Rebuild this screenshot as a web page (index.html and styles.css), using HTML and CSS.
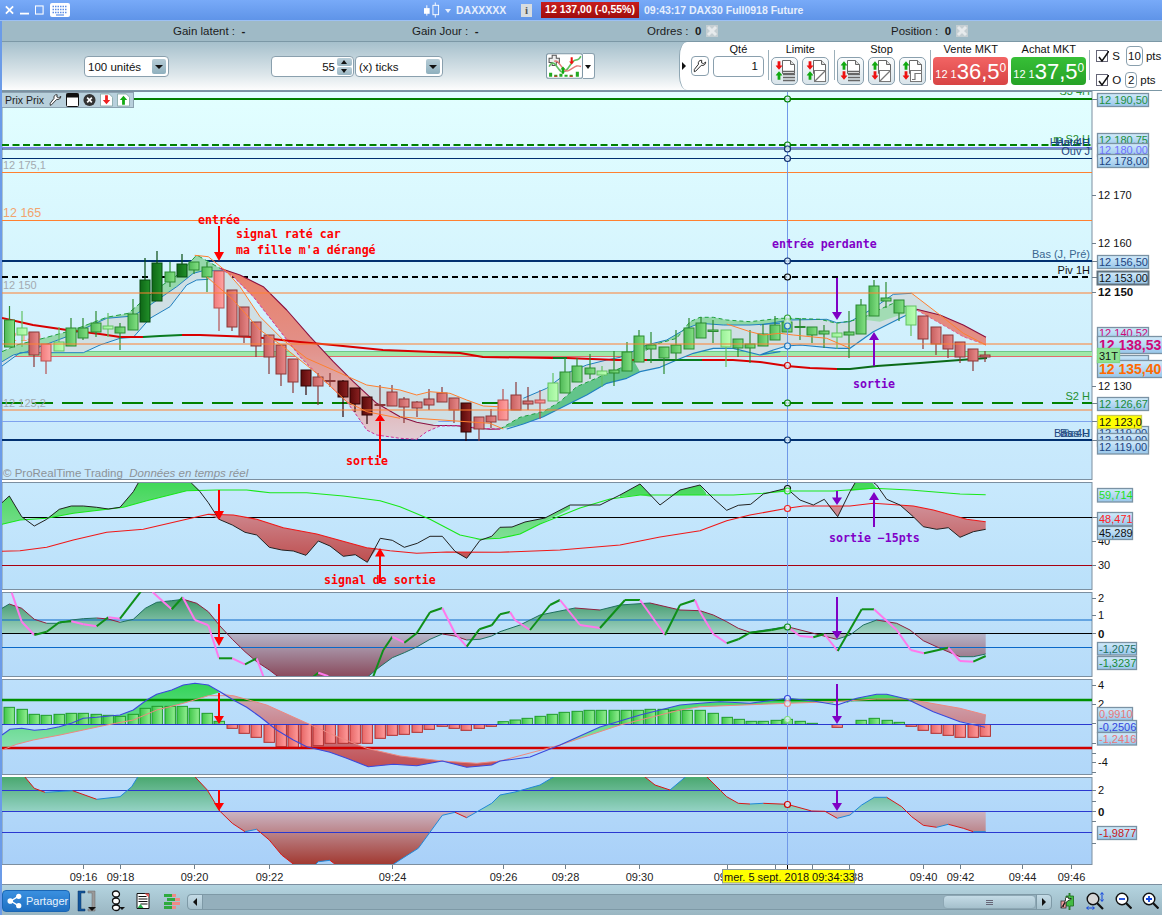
FILE: index.html
```html
<!DOCTYPE html>
<html lang="fr">
<head>
<meta charset="utf-8">
<title>DAX30 Full0918 Future</title>
<link rel="stylesheet" href="styles.css">
</head>
<body>
<svg class="defs" width="0" height="0">
  <defs>
    <symbol id="doc" viewBox="0 0 24 24">
      <path d="M9.5 1.5h8l4 4v9h-12z" fill="#fff" stroke="#666"/>
      <path d="M17.500 1.500v4h4" fill="#ddd" stroke="#666"/>
    </symbol>
    <symbol id="dn" viewBox="0 0 10 12"><path d="M3 0h4v6h3l-5 6-5-6h3z" fill="#ee1111"/></symbol>
    <symbol id="up" viewBox="0 0 10 12"><path d="M3 12h4V6h3L5 0 0 6h3z" fill="#11aa11"/></symbol>
    <symbol id="lines" viewBox="0 0 12 12"><path d="M0 1.500h12M0 4.500h12M0 7.500h12M0 10.500h12" stroke="#666" stroke-width="1.600"/></symbol>
    <symbol id="diag" viewBox="0 0 12 12"><rect x=".5" y=".5" width="11" height="11" fill="#fff" stroke="#777"/><path d="M1 11L11 1" stroke="#777" stroke-width="1.200"/></symbol>
    <symbol id="step" viewBox="0 0 12 12"><rect x=".5" y=".5" width="11" height="11" fill="#fff" stroke="#777"/><path d="M2 9.500h3V3.500h7" fill="none" stroke="#777" stroke-width="1.200"/></symbol>
    <symbol id="wrench" viewBox="0 0 16 16"><path d="M1.500 14.500l1.500-.5 6.500-6.800c2.500.8 5-.8 5-3.700l-2.500 1.800-2.300-1 .3-2.800c-2.800-.3-4.500 1.800-3.800 4.500L1.500 12z" fill="#fff" stroke="#222" stroke-width="1.100"/></symbol>
    <symbol id="bad" viewBox="0 0 12 12"><rect width="12" height="12" fill="#c4ced2"/><path d="M2 2l8 8M10 2l-8 8" stroke="#e6eaec" stroke-width="3"/></symbol>
    <linearGradient id="pm" x1="0" y1="0" x2="0" y2="1"><stop offset="0" stop-color="#e2ffff"/><stop offset="1" stop-color="#c6e7fc"/></linearGradient>
    <linearGradient id="p2g" x1="0" y1="0" x2="0" y2="1"><stop offset="0" stop-color="#c8e9fd"/><stop offset="1" stop-color="#bae0fa"/></linearGradient>
    <linearGradient id="p3g" x1="0" y1="0" x2="0" y2="1"><stop offset="0" stop-color="#c2e4fb"/><stop offset="1" stop-color="#b6dbf9"/></linearGradient>
    <linearGradient id="p4g" x1="0" y1="0" x2="0" y2="1"><stop offset="0" stop-color="#bde0fb"/><stop offset="1" stop-color="#b1d7f9"/></linearGradient>
    <linearGradient id="p5g" x1="0" y1="0" x2="0" y2="1"><stop offset="0" stop-color="#b7dcfa"/><stop offset="1" stop-color="#a9d0f8"/></linearGradient>
    <linearGradient id="lab" x1="0" y1="0" x2="0" y2="1"><stop offset="0" stop-color="#d2ebfb"/><stop offset="1" stop-color="#98c6ea"/></linearGradient>
    <linearGradient id="cg" x1="0" y1="0" x2="1" y2="0"><stop offset="0" stop-color="#4fb857"/><stop offset="1" stop-color="#84e184"/></linearGradient>
    <linearGradient id="cd" x1="0" y1="0" x2="1" y2="0"><stop offset="0" stop-color="#0e6716"/><stop offset="1" stop-color="#22902a"/></linearGradient>
    <linearGradient id="cl" x1="0" y1="0" x2="1" y2="0"><stop offset="0" stop-color="#98f098"/><stop offset="1" stop-color="#bcffb4"/></linearGradient>
    <linearGradient id="cr" x1="0" y1="0" x2="1" y2="0"><stop offset="0" stop-color="#c65f5f"/><stop offset="1" stop-color="#e88a8a"/></linearGradient>
    <linearGradient id="cp" x1="0" y1="0" x2="1" y2="0"><stop offset="0" stop-color="#f07a7a"/><stop offset="1" stop-color="#ffa4a4"/></linearGradient>
    <linearGradient id="ck" x1="0" y1="0" x2="1" y2="0"><stop offset="0" stop-color="#5a0a0a"/><stop offset="1" stop-color="#8c2222"/></linearGradient>
    <linearGradient id="hg" x1="0" y1="0" x2="1" y2="0"><stop offset="0" stop-color="#3ec648"/><stop offset="1" stop-color="#92ee92"/></linearGradient>
    <linearGradient id="hr" x1="0" y1="0" x2="1" y2="0"><stop offset="0" stop-color="#e66666"/><stop offset="1" stop-color="#ff9c9c"/></linearGradient>
    <linearGradient id="mred" gradientUnits="userSpaceOnUse" x1="0" y1="268" x2="0" y2="440"><stop offset="0" stop-color="#ea7f68"/><stop offset=".45" stop-color="#e29088"/><stop offset="1" stop-color="#e0ccd4"/></linearGradient>
    <linearGradient id="g2" gradientUnits="userSpaceOnUse" x1="0" y1="483" x2="0" y2="560"><stop offset="0" stop-color="#42d858"/><stop offset="1" stop-color="#9ae0b0"/></linearGradient>
    <linearGradient id="r2" gradientUnits="userSpaceOnUse" x1="0" y1="505" x2="0" y2="565"><stop offset="0" stop-color="#d09098"/><stop offset="1" stop-color="#bd4b4b"/></linearGradient>
    <linearGradient id="g3" gradientUnits="userSpaceOnUse" x1="0" y1="594" x2="0" y2="633"><stop offset="0" stop-color="#2f8f5a"/><stop offset="1" stop-color="#a0d2c4"/></linearGradient>
    <linearGradient id="r3" gradientUnits="userSpaceOnUse" x1="0" y1="633" x2="0" y2="676"><stop offset="0" stop-color="#b6b6ca"/><stop offset="1" stop-color="#8a4c5e"/></linearGradient>
    <linearGradient id="g4" gradientUnits="userSpaceOnUse" x1="0" y1="684" x2="0" y2="750"><stop offset="0" stop-color="#34d458"/><stop offset="1" stop-color="#8ce0b4"/></linearGradient>
    <linearGradient id="r4" gradientUnits="userSpaceOnUse" x1="0" y1="697" x2="0" y2="768"><stop offset="0" stop-color="#d0a8b4"/><stop offset="1" stop-color="#c04c50"/></linearGradient>
    <linearGradient id="g5" gradientUnits="userSpaceOnUse" x1="0" y1="777" x2="0" y2="811"><stop offset="0" stop-color="#4aa870"/><stop offset="1" stop-color="#94d2c4"/></linearGradient>
    <linearGradient id="r5" gradientUnits="userSpaceOnUse" x1="0" y1="811" x2="0" y2="864"><stop offset="0" stop-color="#ccb6c4"/><stop offset="1" stop-color="#a23a32"/></linearGradient>
    <clipPath id="cm"><rect x="2" y="92" width="1090" height="387"/></clipPath>
    <clipPath id="c2"><rect x="2" y="483" width="1090" height="106"/></clipPath>
    <clipPath id="c3"><rect x="2" y="592" width="1090" height="84"/></clipPath>
    <clipPath id="c4"><rect x="2" y="679" width="1090" height="95"/></clipPath>
    <clipPath id="c5"><rect x="2" y="777" width="1090" height="87"/></clipPath>
    <clipPath id="c3a"><rect x="2" y="592" width="1090" height="41.500"/></clipPath>
    <clipPath id="c3b"><rect x="2" y="633.500" width="1090" height="43"/></clipPath>
    <clipPath id="c5a"><rect x="2" y="777" width="1090" height="34.300"/></clipPath>
    <clipPath id="c5b"><rect x="2" y="811.300" width="1090" height="53"/></clipPath>
  </defs>
</svg>

<div class="app">
  <header class="titlebar">
    <div class="win">
      <svg class="w9" viewBox="0 0 10 10"><path d="M1 1l8 8M9 1L1 9" stroke="#fff" stroke-width="2"/></svg>
      <svg class="w9" viewBox="0 0 10 10"><path d="M0 9h10" stroke="#fff" stroke-width="2"/></svg>
      <svg class="w9" viewBox="0 0 10 10"><rect x=".5" y=".5" width="8.500" height="9" fill="none" stroke="#fff" stroke-width="1.200"/></svg>
      <svg class="kbd" viewBox="0 0 20 14"><rect width="20" height="14" rx="2" fill="#fff"/><path d="M2.500 3.500h15M2.500 6.500h15M2.500 9.500h15" stroke="#5d8fe6" stroke-width="1.400" stroke-dasharray="1.500 1"/><path d="M6 12h8" stroke="#5d8fe6" stroke-width="1.200"/></svg>
    </div>
    <div class="inst">
      <svg class="cndl" viewBox="0 0 17 16"><path d="M3 3v11" stroke="#fff"/><rect y="6" width="6" height="6" fill="#fff"/><path d="M12 0v16" stroke="#fff"/><rect x="9.500" y="3" width="6" height="10" fill="#6fa2f2" stroke="#fff"/></svg>
      <span class="caret"></span>
      <span class="iname">DAXXXXX</span>
      <span class="info">i</span>
      <span class="quote">12 137,00 (-0,55%)</span>
      <span class="tname">09:43:17 DAX30 Full0918 Future</span>
    </div>
  </header>

  <div class="gainbar">
    <div class="g g1">Gain latent :&nbsp; <b>-</b></div>
    <div class="g g2">Gain Jour :&nbsp; <b>-</b></div>
    <div class="g g3">Ordres :&nbsp; <b>0</b> <svg class="bad"><use href="#bad"/></svg></div>
    <div class="g g4">Position :&nbsp; <b>0</b> <svg class="bad"><use href="#bad"/></svg></div>
  </div>

  <div class="tools">
    <div class="tools-left">
      <div class="sel s1"><span>100 unités</span><i class="drop"></i></div>
      <div class="spin"><span>55</span><i class="spb"><u class="tu"></u><u class="td"></u></i></div>
      <div class="sel s2"><span>(x) ticks</span><i class="drop"></i></div>
      <div class="ind">
        <svg viewBox="0 0 36 25"><rect x=".5" y=".5" width="35" height="24" rx="2" fill="#fff" stroke="#7f97a5"/><path d="M3 5h3V2h4v3h3v4h-3v3H6V9H3z" fill="#eee" stroke="#555"/><path d="M3 13c6-11 9 9 15 5s6-10 10-11 4-1 6-4" fill="none" stroke="#5fbe5f" stroke-width="1.500"/><path d="M8 8c5-3 8 12 14 9s7-6 12-4" fill="none" stroke="#e57878" stroke-width="1.400"/><path d="M14 16l2.500-3 2.500 3h-1.500v4h-2v-4z" fill="#11aa11"/><path d="M24 4h2v4h1.500L25 11l-2.500-3H24z" fill="#ee1111"/><path d="M3 23v-4h3v4zM13 23v-3h3v3zM29 23v-5h3v5z" fill="#22aa22"/><path d="M8 23v-2h3v2zM18 23v-2h3v2zM23 23v-2h3v2z" fill="#22aa22"/><path d="M8 22.500h3M23 22.500h3" stroke="#d22"/></svg>
        <span class="inddrop"></span>
      </div>
      <div class="notch"><span class="tri"></span></div>
    </div>
    <div class="tools-right">
      <div class="wr"><svg><use href="#wrench"/></svg></div>
      <div class="col qty"><label>Qté</label><div class="qbox">1</div></div>
      <div class="sep"></div>
      <div class="col lim"><label>Limite</label><div class="btns">
        <div class="ob"><svg viewBox="0 0 24 24"><use href="#doc"/><use href="#dn" x="2.500" y="2" width="7" height="9"/><use href="#up" x="2.500" y="12" width="7" height="9"/><use href="#lines" x="10" y="11" width="12" height="12"/></svg></div>
        <div class="ob"><svg viewBox="0 0 24 24"><use href="#doc"/><use href="#dn" x="2.500" y="2" width="7" height="9"/><use href="#up" x="2.500" y="12" width="7" height="9"/><use href="#diag" x="10" y="11" width="12" height="12"/></svg></div>
      </div></div>
      <div class="sep"></div>
      <div class="col stp"><label>Stop</label><div class="btns">
        <div class="ob"><svg viewBox="0 0 24 24"><use href="#doc"/><use href="#up" x="2.500" y="2" width="7" height="9"/><use href="#dn" x="2.500" y="12" width="7" height="9"/><use href="#lines" x="10" y="11" width="12" height="12"/></svg></div>
        <div class="ob"><svg viewBox="0 0 24 24"><use href="#doc"/><use href="#up" x="2.500" y="2" width="7" height="9"/><use href="#dn" x="2.500" y="12" width="7" height="9"/><use href="#diag" x="10" y="11" width="12" height="12"/></svg></div>
        <div class="ob"><svg viewBox="0 0 24 24"><use href="#doc"/><use href="#up" x="2.500" y="2" width="7" height="9"/><use href="#dn" x="2.500" y="12" width="7" height="9"/><use href="#step" x="10" y="11" width="12" height="12"/></svg></div>
      </div></div>
      <div class="sep"></div>
      <div class="col mkt"><label>Vente MKT</label><div class="price sell"><small>12 1</small><b>36,5</b><sup>0</sup></div></div>
      <div class="col mkt"><label>Achat MKT</label><div class="price buy"><small>12 1</small><b>37,5</b><sup>0</sup></div></div>
      <div class="sep last"></div>
      <div class="opts">
        <div class="opt o1"><span class="ck"><svg viewBox="0 0 12 12"><path d="M2 6l3 4 7-10" fill="none" stroke="#111" stroke-width="1.500"/></svg></span><span>S</span><span class="nb n10">10</span><span>pts</span></div>
        <div class="opt o2"><span class="ck"><svg viewBox="0 0 12 12"><path d="M2 6l3 4 7-10" fill="none" stroke="#111" stroke-width="1.500"/></svg></span><span>O</span><span class="nb n2">2</span><span>pts</span></div>
      </div>
    </div>
  </div>

  <main class="charts">
    <div class="prixbar">
      <span>Prix Prix</span>
      <svg class="pi"><use href="#wrench"/></svg>
      <svg class="pw" viewBox="0 0 13 14"><rect x=".5" y=".5" width="12" height="13" rx="1" fill="#fff" stroke="#111"/><rect x=".5" y=".5" width="12" height="4" fill="#111"/></svg>
      <svg class="pw" viewBox="0 0 14 14"><circle cx="7" cy="7" r="6.500" fill="#333"/><path d="M4.500 4.500l5 5M9.500 4.500l-5 5" stroke="#fff" stroke-width="1.800"/></svg>
      <svg class="pw" viewBox="0 0 14 14"><path d="M.5.500h9.500l3.500 3.500v9.500H.5z" fill="#fff" stroke="#8aa"/><path d="M5.500 2h3v5h2.500L7 11.500 3 7h2.500z" fill="#ee2222"/></svg>
      <svg class="pw" viewBox="0 0 14 14"><path d="M.5.500h9.500l3.500 3.500v9.500H.5z" fill="#fff" stroke="#8aa"/><path d="M5.500 12h3V7h2.500L7 2.500 3 7h2.500z" fill="#11aa11"/></svg>
    </div>
    <svg class="chart" viewBox="2 91 1160 794" width="1160" height="794">
      <!-- panel backgrounds -->
      <rect class="frame" x="2" y="91.500" width="1090" height="388" fill="url(#pm)"/>
      <rect class="frame" x="2" y="482.500" width="1090" height="107" fill="url(#p2g)"/>
      <rect class="frame" x="2" y="592.500" width="1090" height="84" fill="url(#p3g)"/>
      <rect class="frame" x="2" y="679.500" width="1090" height="95" fill="url(#p4g)"/>
      <rect class="frame" x="2" y="777.500" width="1090" height="87" fill="url(#p5g)"/>

      <g clip-path="url(#cm)">
        <g class="hl">
          <path d="M2 99h1090" stroke="#008000" stroke-width="2"/>
          <path d="M2 145h1090" stroke="#008000" stroke-width="2" stroke-dasharray="7 3.500"/>
          <path d="M2 147.500h1090" stroke="#7a7cf0" stroke-width="1"/>
          <path d="M2 149h1090" stroke="#10306f" stroke-width="1"/>
          <path d="M2 158.500h1090" stroke="#003070" stroke-width="1"/>
          <path d="M2 261h1090" stroke="#003070" stroke-width="2"/>
          <path d="M2 277h1090" stroke="#000" stroke-width="2" stroke-dasharray="6 4"/>
          <rect x="2" y="351" width="1090" height="5" fill="#a0e8a8"/>
          <path d="M2 351.500h1090" stroke="#70c888" stroke-width="1"/>
          <path d="M2 356.500h1090" stroke="#e46a6a" stroke-width="1"/>
          <path d="M2 403h1090" stroke="#008000" stroke-width="2" stroke-dasharray="21 9"/>
          <path d="M2 421.500h1090" stroke="#7ea2ee" stroke-width="1"/>
          <path d="M2 440h1090" stroke="#003070" stroke-width="2"/>
        </g>
        <text class="ghost" x="3" y="169">12 175,1</text>
        <text class="ghost or big" x="3" y="217">12 165</text>
        <text class="ghost" x="3" y="289">12 150</text>
        <text class="ghost or big" x="3" y="341">12 139</text>
        <text class="ghost" x="3" y="407">12 125,2</text>
        <g id="mainLines"></g>
        <g id="candles"></g>
        <g id="oranges"></g>
        <text class="copy" x="3" y="477">© ProRealTime Trading&nbsp; <tspan class="it">Données en temps réel</tspan></text>
        <text class="rt grn" x="1090" y="95">S3 4H</text>
        <text class="rt grn" x="1090" y="143">m S2 H</text>
        <text class="rt nvy" x="1090" y="146">Haut 4H</text>
        <text class="rt nvy" x="1090" y="146">Haut H</text>
        <text class="rt nvy" x="1090" y="155">Ouv J</text>
        <text class="rt nvy2" x="1090" y="258">Bas (J, Pré)</text>
        <text class="rt blk" x="1090" y="274">Piv 1H</text>
        <text class="rt grn" x="1090" y="400">S2 H</text>
        <text class="rt nvy" x="1090" y="437">Bas 4H</text>
        <text class="rt nvy" x="1090" y="437">Bas H</text>
        <text class="rt nvy2" x="1090" y="437">Bas J</text>
      </g>

      <g clip-path="url(#c2)" id="p2"></g>
      <g clip-path="url(#c3)" id="p3"></g>
      <g id="histWrap" clip-path="url(#c4)"><g id="p4"></g></g>
      <g clip-path="url(#c5)" id="p5"></g>

      <!-- cursor -->
      <path d="M787.500 92V865" stroke="#7098e8" stroke-width="1"/>
      <g class="mk">
        <circle cx="787.500" cy="99" r="3" stroke="#008000"/>
        <circle cx="787.500" cy="145" r="3" stroke="#008000"/>
        <circle cx="787.500" cy="149" r="3" stroke="#10306f"/>
        <circle cx="787.500" cy="158.500" r="3" stroke="#10306f"/>
        <circle cx="787.500" cy="261" r="3" stroke="#10306f"/>
        <circle cx="787.500" cy="277" r="3" stroke="#000"/>
        <circle cx="787.500" cy="318" r="3" stroke="#2fa02f"/>
        <circle cx="787.500" cy="322" r="3" stroke="#9adf9a"/>
        <circle cx="787.500" cy="326" r="3" stroke="#1f78c0"/>
        <circle cx="787.500" cy="346" r="3" stroke="#1f78c0"/>
        <circle cx="787.500" cy="365.500" r="3" stroke="#d00000"/>
        <circle cx="787.500" cy="403" r="3" stroke="#008000"/>
        <circle cx="787.500" cy="440" r="3" stroke="#003070"/>
        <circle cx="787.500" cy="488.500" r="3" stroke="#111"/>
        <circle cx="787.500" cy="491" r="3" stroke="#22dd22"/>
        <circle cx="787.500" cy="508.500" r="3" stroke="#ee2222"/>
        <circle cx="787.500" cy="627" r="3" stroke="#108a10"/>
        <circle cx="787.500" cy="698.500" r="3" stroke="#3344dd"/>
        <circle cx="787.500" cy="703.500" r="3" stroke="#e88"/>
        <circle cx="787.500" cy="719.500" r="3" stroke="#7fdc7f"/>
        <circle cx="787.500" cy="804.500" r="3" stroke="#d00000"/>
      </g>

      <!-- annotations -->
      <g class="ar red">
        <path d="M219 226v27M380 422v36M219 490v24M380 555v28M219 604v36M219 693v24M219 790v14"/>
      </g>
      <g class="hd red">
        <path d="M214 252h10l-5 9zM375 421h10l-5-7zM214 511h10l-5 9zM375 556.500h10l-5-8.500zM214 637h10l-5 9zM214 716h10l-5 8zM214 803h10l-5 8z"/>
      </g>
      <g class="ar pur">
        <path d="M837 278v36M874 340v26M837 491v8M874 498v29M837 597v36M837 684v32M837 790v14"/>
      </g>
      <g class="hd pur">
        <path d="M832 312h10l-5 8zM869 340h10l-5-8zM832 497.500h10l-5 7.500zM869 500h10l-5-8zM832 631h10l-5 8zM832 716h10l-5 8zM832 803h10l-5 8z"/>
      </g>
      <text class="note rd" x="198" y="224">entrée</text>
      <text class="note rd" x="236" y="238">signal raté car</text>
      <text class="note rd" x="236" y="254">ma fille m'a dérangé</text>
      <text class="note rd" x="346" y="465">sortie</text>
      <text class="note rd" x="324" y="584">signal de sortie</text>
      <text class="note pu" x="772" y="248">entrée perdante</text>
      <text class="note pu" x="853" y="388">sortie</text>
      <text class="note pu" x="829" y="542">sortie −15pts</text>

      <!-- axis ticks -->
      <g class="tick">
        <path d="M1092 99.500h5M1092 195.500h4M1092 243.500h4M1092 261.500h5M1092 277.500h5M1092 292.500h4M1092 386.500h4M1092 403.500h5M1092 421.500h5M1092 440.500h5M1092 517.500h5M1092 541.500h4M1092 565.500h4M1092 598.500h4M1092 615.500h4M1092 633.500h4M1092 685.500h4M1092 704.500h4M1092 723.500h4M1092 743.500h4M1092 753.500h4M1092 762.500h4M1092 772.500h4M1092 790.500h4M1092 801.500h4M1092 811.500h4M1092 821.500h4M1092 843.500h4"/>
      </g>
      <g class="ticklbl">
        <text x="1098" y="199">12 170</text>
        <text x="1098" y="247">12 160</text>
        <text x="1098" y="296" class="strong">12 150</text>
        <text x="1098" y="390">12 130</text>
        <text x="1098" y="545">40</text>
        <text x="1098" y="569">30</text>
        <text x="1098" y="602">2</text>
        <text x="1098" y="619">1</text>
        <text x="1098" y="638" class="strong">0</text>
        <text x="1098" y="689">4</text>
        <text x="1098" y="708">2</text>
        <text x="1098" y="766">-4</text>
        <text x="1098" y="794">2</text>
        <text x="1098" y="816" class="strong">0</text>
      </g>
      <g class="labels">
        <g><rect x="1097.500" y="93.500" width="51" height="13"/><text class="lg" x="1099" y="104">12 190,50</text></g>
        <g><rect x="1097.500" y="133.500" width="51" height="13"/><text class="lg" x="1099" y="144">12 180,75</text></g>
        <g><rect x="1097.500" y="143.500" width="51" height="13"/><text class="lv" x="1099" y="153.500">12 180,00</text></g>
        <g><rect x="1097.500" y="154.500" width="51" height="13"/><text class="ln" x="1099" y="165">12 178,00</text></g>
        <g><rect x="1097.500" y="255.500" width="51" height="13"/><text class="ln" x="1099" y="266">12 156,50</text></g>
        <g><rect class="thick" x="1097.500" y="271.500" width="51" height="13"/><text class="lb" x="1099" y="282">12 153,00</text></g>
        <g><rect x="1097.500" y="327.500" width="51" height="13"/><text class="lm" x="1099" y="337">12 140,52</text></g>
        <g><rect x="1097.500" y="336.500" width="66" height="17"/><text class="lm big" x="1099" y="350">12 138,53</text></g>
        <g><rect x="1097.500" y="355.500" width="51" height="8"/></g>
        <g><rect x="1097.500" y="360.500" width="66" height="17"/><text class="lo big" x="1099" y="374">12 135,40</text></g>
        <g><rect class="tg" x="1097.500" y="348.500" width="22" height="14"/><text class="lb" x="1099" y="359.500">31T</text></g>
        <g><rect x="1097.500" y="397.500" width="51" height="13"/><text class="lg2" x="1099" y="408">12 126,67</text></g>
        <g><rect x="1097.500" y="426.500" width="51" height="13"/><text class="ln" x="1099" y="437">12 119,00</text></g>
        <g><rect x="1097.500" y="433.500" width="51" height="13"/><text class="ln" x="1099" y="444">12 119,00</text></g>
        <g><rect class="yl" x="1097.500" y="415.500" width="44" height="13"/><text class="lb" x="1099" y="426">12 123,0</text></g>
        <g><rect x="1097.500" y="440.500" width="51" height="13.500"/><text class="ln" x="1099" y="451">12 119,00</text></g>
        <g><rect x="1097.500" y="488.500" width="35" height="13.500"/><text class="l59" x="1099" y="499">59,714</text></g>
        <g><rect x="1097.500" y="512.500" width="35" height="13"/><text class="l48" x="1099" y="523">48,471</text></g>
        <g><rect x="1097.500" y="526.500" width="35" height="13"/><text class="lb" x="1099" y="537">45,289</text></g>
        <g><rect x="1097.500" y="642.500" width="39" height="12.500"/><text class="lt" x="1099" y="652.500">-1,2075</text></g>
        <g><rect x="1097.500" y="656.500" width="39" height="13"/><text class="lg2" x="1099" y="667">-1,3237</text></g>
        <g><rect x="1097.500" y="707.500" width="35" height="13"/><text class="ls" x="1099" y="718">0,9910</text></g>
        <g><rect x="1097.500" y="720.500" width="39" height="12"/><text class="lbl" x="1099" y="731">-0,2506</text></g>
        <g><rect x="1097.500" y="732.500" width="39" height="12.500"/><text class="ls" x="1099" y="743">-1,2416</text></g>
        <g><rect x="1097.500" y="826.500" width="39" height="13"/><text class="l48b" x="1099" y="837">-1,9877</text></g>
      </g>

      <!-- time axis -->
      <path class="baseline" d="M2 884.500h1160"/>
      <g class="tick">
        <path d="M83.500 865v4M120.500 865v4M194.500 865v4M269.500 865v4M392.500 865v4M503.500 865v4M565.500 865v4M639.500 865v4M727.500 865v4M775.500 865v4M812.500 865v4M849.500 865v4M923.500 865v4M960.500 865v4M1022.500 865v4M1071.500 865v4"/>
      </g>
      <path d="M787.500 865v4" stroke="#000"/>
      <g class="time">
        <text x="83.500" y="881">09:16</text>
        <text x="120.500" y="881">09:18</text>
        <text x="194.500" y="881">09:20</text>
        <text x="269.500" y="881">09:22</text>
        <text x="392.500" y="881">09:24</text>
        <text x="503.500" y="881">09:26</text>
        <text x="565.500" y="881">09:28</text>
        <text x="639.500" y="881">09:30</text>
        <text x="727.500" y="881">09:32</text>
        <text x="849.500" y="881">09:38</text>
        <text x="923.500" y="881">09:40</text>
        <text x="960.500" y="881">09:42</text>
        <text x="1022.500" y="881">09:44</text>
        <text x="1071.500" y="881">09:46</text>
      </g>
      <rect class="tip" x="722.500" y="869.500" width="132" height="13.500"/>
      <text class="tiptxt" x="724" y="880.500">mer. 5 sept. 2018 09:34:33</text>
    </svg>
  </main>

  <footer class="bottom">
    <div class="share">
      <svg viewBox="0 0 16 16"><path d="M4 8l8-5M4 8l8 5" stroke="#fff" stroke-width="1.500"/><circle cx="3.500" cy="8" r="3" fill="#fff"/><circle cx="12.500" cy="3" r="2.800" fill="#fff"/><circle cx="12.500" cy="13" r="2.800" fill="#fff"/></svg>
      <span>Partager</span>
    </div>
    <svg class="b1" viewBox="0 0 19 22"><path d="M1 1h7v2H4v16h4v2H1z" fill="#12569c" stroke="#0a3060" stroke-width=".5"/><path d="M11 1h7v20h-7v-2h4V3h-4z" fill="#9a9a9a" stroke="#666" stroke-width=".5"/><path d="M11 17h8l-4 4z" fill="#111"/></svg>
    <svg class="b2" viewBox="0 0 17 22"><path d="M8 1c-3 0-3.500 2-3.500 3s1 3 3.500 3 3.500-1.500 3.500-3S10 1 8 1zM8 8c-3 0-3.500 2-3.500 3s1 3 3.500 3 3.500-1.500 3.500-3S10 8 8 8zM8 15c-3 0-3.500 1.500-3.500 2.500S5.500 20.500 8 20.500s3.500-1.500 3.500-3-1.500-2.500-3.500-2.500z" fill="#fff" stroke="#111" stroke-width="1.300"/><path d="M11 17h6l-3 3z" fill="#111"/></svg>
    <svg class="b3" viewBox="0 0 13 16"><path d="M.5.500h12v15H.5z" fill="#fff" stroke="#111"/><path d="M2 3.500h8M2 6h9M2 8.500h9M4 11h7" stroke="#111" stroke-width="1.200"/><path d="M8 .5h4.500v4z" fill="#e05a5a"/><path d="M1 15l3-4 3 4z" fill="#22aa44"/></svg>
    <svg class="b4" viewBox="0 0 16 17"><path d="M0 1h8v3H0zM3 5h8v3H3zM0 9h8v3H0zM0 13h8v3H0z" fill="#2eaa3e"/><path d="M8 1h4v3H8zM11 5h5v3h-5zM8 9h8v3H8zM8 13h4v3H8z" fill="#ef8a86"/></svg>
    <div class="scroll">
      <div class="sbtn"><span class="tl"></span></div>
      <div class="thumb"><span class="gr"></span></div>
      <div class="sbtn r"><span class="tr"></span></div>
    </div>
    <svg class="b5" viewBox="0 0 15 17"><path d="M9 0h1v3h3.500v10H10v4H9v-4H6V3h3z" fill="#44bb44" stroke="#1a6a1a" stroke-width=".8"/><rect x="1" y="8" width="5" height="7" fill="#ee9999" stroke="#333" stroke-width=".8"/><path d="M1 15l5-7" stroke="#333"/><path d="M3 14l1-3 5-4c1 .5 2 0 2-2l-1 1-1.500-.5L8 4c-2 0-3 1-2.500 3z" fill="#fff" stroke="#111" stroke-width=".8"/></svg>
    <svg class="b6" viewBox="0 0 19 18"><circle cx="7" cy="7" r="5.800" fill="#d6d6d6" stroke="#111" stroke-width="1.400"/><path d="M11 11l6 6" stroke="#111" stroke-width="2.200"/><path d="M16 1v8M14.500 2.500l1.500-2 1.500 2M14.500 7.500l1.500 2 1.500-2M1 16h7M2.500 14.500l-2 1.500 2 1.500M6.500 14.500l2 1.500-2 1.500" fill="none" stroke="#1144dd"/></svg>
    <svg class="b7" viewBox="0 0 17 17"><circle cx="7" cy="7" r="5.800" fill="#fff" stroke="#111" stroke-width="1.400"/><path d="M11 11l5.500 5.500" stroke="#111" stroke-width="2.200"/><path d="M4 7h6" stroke="#1144dd" stroke-width="1.800"/></svg>
    <svg class="b7" viewBox="0 0 17 17"><circle cx="7" cy="7" r="5.800" fill="#fff" stroke="#111" stroke-width="1.400"/><path d="M11 11l5.500 5.500" stroke="#111" stroke-width="2.200"/><path d="M4 7h6M7 4v6" stroke="#1144dd" stroke-width="1.800"/></svg>
  </footer>
</div>
<script src="script.js"></script>
</body>
</html>
```
FILE: styles.css
```css
*{box-sizing:border-box}
html,body{margin:0;padding:0;width:1162px;height:915px;overflow:hidden;background:#fff;font-family:"Liberation Sans",Arial,sans-serif;color:#111}
.defs{position:absolute}
.app{width:1162px;height:915px;display:flex;flex-direction:column;border-left:2px solid #6b9be8}
.titlebar{height:21px;margin-left:-2px;display:flex;align-items:center;background:linear-gradient(#78aaf8,#5f94e8);border-bottom:1px solid #9cc0f4;color:#fff}
.win{display:flex;align-items:center;width:424px;padding-left:5px}
.w9{width:9px;height:10px;margin-right:6px}
.kbd{width:20px;height:14px;margin-left:0}
.inst{display:flex;align-items:center;font-size:10.500px;font-weight:700;color:#e6effd}
.cndl{width:16px;height:16px}
.caret{width:0;height:0;margin:2px 5px 0;border:3px solid transparent;border-top:4px solid #e6effd;border-bottom:0}
.iname{width:65px}
.info{width:11px;height:13px;margin-right:9px;background:#d8dde0;color:#555;font:700 11px "Liberation Serif",serif;text-align:center;line-height:13px}
.quote{height:16px;width:98px;background:linear-gradient(#c81e1e,#a00c0c);color:#fff;font-size:10.500px;line-height:15px;text-align:center;white-space:nowrap}
.tname{margin-left:5px;font-size:10.500px;white-space:nowrap}
.gainbar{height:21px;background:#9fbac6;border-bottom:1.500px solid #7c98a6;display:flex;align-items:center;font-size:11.500px;color:#1c1c1c}
.g{display:flex;align-items:center;white-space:pre}
.g1{margin-left:171px;width:239px}
.g2{width:235px}
.g3{width:244px}
.bad{width:12px;height:12px;margin-left:5px}
.tools{height:49px;display:flex;border-bottom:1px solid #7c98a6;background:#fff}
.tools-left{width:686px;display:flex;align-items:flex-start;padding:14px 0 0 82px;background:linear-gradient(#a6c0cc,#dfe8ec 70%,#fdfdfd)}
.sel,.spin{height:21px;background:#fff;border:1px solid #8aa0ae;border-radius:4px;display:flex;align-items:center;font-size:11.500px;position:relative}
.sel span{padding-left:3px}
.s1{width:85px;justify-content:space-between;padding-right:2px}
.s2{width:88px;margin-left:1px;justify-content:space-between;padding-right:2px}
.drop{width:14px;height:15px;background:linear-gradient(#b6ccd6,#8fb0be);border-radius:2px;position:relative}
.drop::after{content:"";position:absolute;left:3px;top:6px;border:4px solid transparent;border-top:4px solid #111;border-bottom:0}
.spin{width:83px;margin-left:102px;justify-content:flex-end;padding-right:1px}
.spb{width:15px;height:17px;margin-left:2px;display:flex;flex-direction:column;justify-content:space-between}
.tu,.td{height:8px;background:linear-gradient(#bcd0da,#9ab6c2);display:block;position:relative;border-radius:2px}
.tu::after,.td::after{content:"";position:absolute;left:4px;top:2px;border:3px solid transparent}
.tu::after{border-bottom:4px solid #111;border-top:0}
.td::after{border-top:4px solid #111;border-bottom:0}
.ind{display:flex;margin:-3px 0 0 103px;height:26px;width:49px}
.ind svg{width:37px;height:26px}
.inddrop{width:12px;height:26px;background:#fff;border:1px solid #8aa0ae;border-left:0;border-radius:0 3px 3px 0;position:relative}
.inddrop::after{content:"";position:absolute;left:2px;top:11px;border:3.500px solid transparent;border-top:4px solid #111;border-bottom:0}
.notch{margin:-14px 0 0 auto;width:9px;height:48px;background:#fff;border-left:1px solid #8fa7b4;border-radius:8px 0 0 8px/14px 0 0 14px;display:flex;align-items:center}
.tri{border:4px solid transparent;border-left:4px solid #111;border-right:0;margin-left:2px}
.tools-right{flex:1;display:flex;align-items:flex-start;background:#fff;padding-left:3px;min-width:0}
.wr{width:18px;height:20px;margin-top:14px;border:1px solid #8aa0ae;border-radius:4px;background:#fff;display:flex;align-items:center;justify-content:center}
.wr svg{width:14px;height:14px}
.col{display:flex;flex-direction:column;align-items:center}
.col label{height:14px;line-height:14px;font-size:11px;color:#111;white-space:nowrap}
.qty{width:51px;margin-left:4px}
.qbox{width:51px;height:21px;border:1px solid #8aa0ae;border-radius:4px;background:#fff;font-size:11.500px;line-height:19px;text-align:right;padding-right:5px}
.sep{width:1px;height:30px;margin:8px 2px 0 4px;background:#9cb0ba}
.lim{width:59px}.stp{width:90px}
.btns{display:flex;gap:4px;margin-top:1px}
.ob{width:27px;height:28px;border:1px solid #8aa0ae;border-radius:5px;background:linear-gradient(#fafcfd,#d9e4ea);display:flex;align-items:center;justify-content:center}
.ob svg{width:24px;height:24px}
.mkt{width:75px;margin-right:3px}
.price{width:75px;height:28px;margin-top:1px;border-radius:4px;color:#fff;display:flex;align-items:flex-start;justify-content:center;white-space:nowrap;font-weight:400}
.price small{font-size:11px;line-height:35px;margin-right:0}
.price b{font-size:22px;font-weight:400;line-height:30px}
.price sup{font-size:12px;line-height:22px;vertical-align:baseline}
.sell{background:linear-gradient(#f26464,#d84444)}
.buy{background:linear-gradient(#37bf37,#26a226)}
.last{margin-left:0;margin-right:6px}
.opts{font-size:11.500px;width:66px}
.opt{display:flex;align-items:center;white-space:nowrap}
.o1{height:20px;margin-top:4px}
.o2{height:16px;margin-top:6px}
.ck{width:12px;height:12px;border:1px solid #667;background:#fff;margin-right:4px;display:block}
.ck svg{display:block;width:12px;height:12px}
.nb{border:1px solid #8aa0ae;border-radius:4px;text-align:center;margin:0 3px 0 0;background:#fff;display:block}
.n10{width:17px;height:20px;line-height:18px;margin-left:6px}
.n2{width:12px;height:16px;line-height:14px;margin-left:4px}
.charts{position:relative;height:794px;background:#fff}
.chart{display:block;position:relative}
.prixbar{position:absolute;z-index:2;left:0;top:1px;width:132px;height:16px;background:#b8d0dc;border:1px solid #8ba2b0;border-left:0;display:flex;align-items:center;gap:4px;padding-left:3px;font-size:10.500px;color:#222;white-space:nowrap}
.pi{width:13px;height:14px;margin-left:1px}
.pw{width:13px;height:14px}
.frame{stroke:#7c8fa0;stroke-width:1}
.ghost{font-size:11px;fill:#a3aab0}
.or{fill:#f2a46e}
.big{font-size:12.500px}
.copy{font-size:11.500px;fill:#8d9398}
.it{font-style:italic}
.rt{font-size:11px;text-anchor:end}
.grn{fill:#1f8f2f}
.nvy{fill:#1d4480}
.nvy2{fill:#3a6690}
.blk{fill:#111}
.mk circle{fill:#e8f8ff;fill-opacity:.75;stroke-width:1.200}
.ar path{fill:none;stroke-width:2}
.ar.red path{stroke:#ff0000}
.ar.pur path{stroke:#7f00c4}
.hd.red path{fill:#ff0000}
.hd.pur path{fill:#7f00c4}
.note{font-family:"DejaVu Sans Mono",monospace;font-weight:700;font-size:11.600px}
.rd{fill:#ff0000}
.pu{fill:#8000c8}
.tick path{stroke:#6e7f8c;stroke-width:1;fill:none}
.ticklbl text{font-size:11px;fill:#111}
.ticklbl .strong{font-weight:700;font-size:11.500px}
.labels rect{fill:url(#lab);stroke:#7a92a4;stroke-width:1.300}
.labels text{font-size:11px}
.labels .thick{stroke:#60727e;stroke-width:2}
.labels .tg{fill:#90e294;stroke:#80d884}
.labels .yl{fill:#ffff00;stroke:#c9c958}
.labels .big{font-size:14px;font-weight:700}
.lg{fill:#1f8f3f}.lg2{fill:#178a3a}.lv{fill:#7070ff}.ln{fill:#1d4480}.lb{fill:#111}
.lm{fill:#cf0a78}.lo{fill:#ff6a00}.l59{fill:#1ee01e}.l48{fill:#ff2020}.lt{fill:#1f6f60}
.ls{fill:#e87878}.lbl{fill:#3344dd}.l48b{fill:#c81818}
.baseline{stroke:#7c8fa0;stroke-width:1}
.time text{font-size:11px;fill:#222;text-anchor:middle}
.tip{fill:#ffff00;stroke:#8a9aa0;stroke-width:1}
.tiptxt{font-size:11px;fill:#111}
.bottom{height:30px;margin-top:0;background:linear-gradient(#b4d4e0,#9ab6c2);display:flex;align-items:flex-start;padding-top:5px;position:relative;top:0}
.share{width:68px;height:22px;background:linear-gradient(#3a90e0,#1f6fc2);border:1px solid #1a66b4;border-radius:4px;display:flex;align-items:center;color:#e8f2fc;font-size:11px;gap:4px;padding-left:4px}
.share svg{width:15px;height:16px}
.b1{width:19px;height:22px;margin-left:7px}
.b2{width:17px;height:22px;margin-left:12px}
.b3{width:14px;height:16px;margin:3px 0 0 11px}
.b4{width:16px;height:17px;margin:3px 0 0 14px}
.scroll{display:flex;width:865px;height:16px;margin:4px 0 0 7px;background:#94afbc;border:1px solid #7e99a6;border-radius:4px}
.sbtn{width:15px;height:14px;background:linear-gradient(#c4dbe6,#a5c0cc);border-radius:4px 0 0 4px;border-right:1px solid #7e99a6;display:flex;align-items:center;justify-content:center}
.sbtn.r{border-radius:0 4px 4px 0;border-left:1px solid #7e99a6;border-right:0}
.tl{border:4px solid transparent;border-right:4px solid #111;border-left:0}
.tr{border:4px solid transparent;border-left:4px solid #111;border-right:0}
.thumb{width:93px;margin-left:auto;height:14px;background:linear-gradient(#c4dbe6,#a5c0cc);border-radius:4px;border:1px solid #8da7b4;display:flex;align-items:center;justify-content:center}
.gr{width:7px;height:5px;border-top:1px solid #667;border-bottom:1px solid #667;position:relative}
.gr::after{content:"";position:absolute;left:0;right:0;top:1px;height:1px;background:#667}
.b5{width:15px;height:17px;margin:3px 0 0 8px}
.b6{width:19px;height:18px;margin:2px 0 0 11px}
.b7{width:17px;height:17px;margin:2px 0 0 10px}
.b7+.b7{margin-left:10px}
```
FILE: script.js
```js
(function () {
  var NS = 'http://www.w3.org/2000/svg';
  function el(parent, tag, attrs) {
    var e = document.createElementNS(NS, tag);
    for (var k in attrs) e.setAttribute(k, attrs[k]);
    parent.appendChild(e);
    return e;
  }
  function conv(ox, oy, a) {
    var r = [];
    for (var i = 0; i < a.length; i += 2) r.push([ox + a[i] / 3, oy + a[i + 1] / 3]);
    return r;
  }
  function Z3(a) { return conv(0, 230, a); }
  function Z5(a) { return conv(760, 280, a); }
  function Z6(a) { return conv(400, 280, a); }
  function str(p) { return p.map(function (q) { return q[0].toFixed(1) + ',' + q[1].toFixed(1); }).join(' '); }
  function line(g, p, stroke, w, dash) {
    var at = { points: str(p), fill: 'none', stroke: stroke, 'stroke-width': w, 'stroke-linejoin': 'round' };
    if (dash) at['stroke-dasharray'] = dash;
    return el(g, 'polyline', at);
  }
  function area(g, top, bot, fill, clip) {
    var at = { points: str(top.concat(bot.slice().reverse())), fill: fill };
    if (clip) at['clip-path'] = 'url(#' + clip + ')';
    return el(g, 'polygon', at);
  }
  function seg(g, p, cDown, cUp, w) {
    for (var i = 1; i < p.length; i++) {
      line(g, [p[i - 1], p[i]], p[i][1] > p[i - 1][1] + 0.01 ? cDown : cUp, w);
    }
  }

  /* ---------- main chart moving averages ---------- */
  var m = document.getElementById('mainLines');
  var BU = Z3([6, 395, 40, 375, 80, 365, 200, 320, 320, 265, 400, 258, 450, 225, 530, 170, 580, 130, 610, 122, 670, 122]);
  var O1 = Z3([680, 125, 720, 170, 780, 260, 850, 330, 920, 385, 1000, 420, 1100, 465, 1200, 480]);
  var O1b = Z6([50, 345, 90, 335, 150, 340, 200, 360, 250, 378, 295, 380]);
  var BU2 = Z6([370, 355, 440, 325, 500, 280, 560, 255, 620, 240, 660, 232, 740, 195, 800, 180, 860, 145, 900, 130, 970, 135, 1050, 135, 1140, 130]);
  var BU3 = Z5([90, 120, 200, 118, 230, 128, 270, 125, 340, 85, 400, 43, 455, 40]);
  var RT3 = Z5([540, 105, 610, 135, 678, 172]);
  var BL = Z3([6, 408, 60, 368, 250, 368, 300, 345, 360, 325, 400, 322, 450, 265, 510, 230, 560, 165, 590, 150, 625, 148]);
  var O2 = Z3([700, 210, 780, 300, 850, 350, 950, 430, 1040, 515, 1100, 590, 1130, 615, 1200, 625]);
  var O2b = Z6([50, 478, 80, 455, 120, 420, 200, 430, 280, 445]);
  var BL2 = Z6([320, 447, 370, 432, 430, 410, 500, 375, 560, 345, 620, 310, 680, 295, 720, 275, 780, 262, 830, 240, 880, 220, 940, 205, 1000, 205, 1080, 225, 1140, 215]);
  var BL3 = Z5([0, 225, 40, 210, 80, 198, 120, 195, 230, 205, 270, 205, 340, 155, 420, 115, 470, 90]);
  var RB3 = Z5([540, 130, 610, 170, 678, 195]);
  area(m, BU.concat(O1, O1b, BU2, BU3, RT3), BL.concat(O2, O2b, BL2, BL3, RB3), '#cfdfe4');

  var GL = Z3([6, 365, 50, 345, 130, 325, 220, 300, 320, 262, 385, 250, 420, 220, 480, 170, 540, 130, 590, 75, 620, 92, 660, 115]);
  area(m, GL, BU, '#96d8ac');
  var GD1 = Z6([300, 447, 360, 412, 430, 395, 480, 365, 530, 320, 600, 290, 660, 265, 700, 240]);
  var BLm = Z6([300, 447, 370, 432, 430, 410, 500, 375, 560, 345, 620, 310, 680, 295, 720, 275]);
  area(m, GD1, BLm, '#62c48a');
  var GD2 = Z6([700, 240, 760, 195, 830, 175, 870, 125, 900, 112, 940, 112, 980, 120, 1050, 125, 1140, 115]).concat(Z5([100, 115, 180, 118, 230, 130]));
  var BUm = Z6([700, 215, 740, 195, 800, 180, 860, 145, 900, 130, 970, 135, 1050, 135, 1140, 130]).concat(Z5([90, 120, 200, 118, 230, 130]));
  area(m, GD2, BUm, '#90d8a8');
  var GD3 = Z5([300, 118, 360, 88, 400, 70, 470, 88]);
  area(m, GD3, Z5([300, 118, 360, 125, 420, 105, 470, 90]), '#a2dcb4');

  var T = Z3([660, 115, 720, 135, 790, 170, 860, 240, 930, 320, 1000, 395, 1060, 455, 1130, 520, 1200, 560]).concat(Z6([50, 427, 100, 436, 170, 437, 230, 445, 270, 448, 300, 447]));
  var M = Z3([660, 115, 700, 140, 760, 200, 830, 290, 900, 380, 960, 440, 1040, 515, 1080, 570, 1100, 600, 1130, 615, 1200, 625]).concat(Z6([50, 478, 80, 455, 120, 438, 180, 437, 240, 445, 300, 447]));
  area(m, T, M, 'url(#mred)');
  var RT = Z5([470, 88, 540, 105, 610, 135, 678, 172]);
  var RB = Z5([470, 90, 540, 130, 610, 170, 678, 195]);
  area(m, RT, RB, 'url(#mred)');

  line(m, BU, '#2080c0', 1);
  line(m, BU2, '#2080c0', 1);
  line(m, Z5([0, 135, 90, 120, 200, 118, 230, 128, 270, 125, 340, 85, 400, 43, 455, 40]), '#2080c0', 1);
  line(m, BL, '#2080c0', 1);
  line(m, BL2.concat(BL3), '#2080c0', 1.2);
  line(m, T, '#8a1040', 1.1);
  line(m, RT, '#8a1040', 1.1);
  line(m, M, '#d0309a', 1, '3 2');
  line(m, RB, '#e06090', 1, '3 2');
  line(m, GL, '#20a040', 1, '5 3');
  line(m, GD1.concat(GD2, GD3), '#20a040', 1, '4 3');

  var ma = [[2, 318], [33, 325], [67, 330], [100, 334], [120, 337], [143, 337]];
  line(m, ma, '#d80000', 2);
  line(m, [[143, 337], [160, 336], [182, 335]], '#0a7a20', 2);
  line(m, [[182, 335], [200, 335], [253, 337], [300, 342], [333, 345], [383, 350], [433, 352], [460, 353], [483, 357], [553, 358]], '#d80000', 2);
  line(m, [[553, 358], [567, 358]], '#0a7a20', 2);
  line(m, [[567, 358], [617, 360], [647, 360]], '#d80000', 2);
  line(m, [[647, 360], [702, 360]], '#0a7a20', 2);
  line(m, [[702, 360], [733, 360], [760, 362], [787, 366], [810, 368], [837, 369]], '#d80000', 2);
  line(m, [[837, 369], [850, 369], [877, 366], [920, 363], [960, 360], [987, 358]], '#0a6a18', 2);

  /* ---------- candles ---------- */
  var candles = [
    [9.5, 320, 347, 306, 347, 'g'], [22, 328, 335, 311, 347, 'l'], [34, 332, 355, 332, 367, 'r'], [46, 344, 361, 344, 374, 'p'],
    [59, 342, 351, 327, 351, 'l'], [71, 328, 346, 318, 346, 'g'], [83, 328, 338, 318, 340, 'g'], [96, 323, 332, 311, 337, 'g'],
    [108, 326, 329, 313, 337, 'l'], [120, 327, 333, 323, 350, 'g'], [133, 314, 330, 299, 330, 'g'], [145, 280, 322, 258, 322, 'd'],
    [157, 263, 301, 251, 301, 'd'], [170, 272, 282, 262, 287, 'g'], [182, 264, 277, 254, 277, 'd'], [194, 262, 270, 262, 274, 'g'],
    [207, 267, 277, 262, 292, 'g'], [219, 271, 308, 271, 331, 'p'], [232, 290, 327, 290, 331, 'r'], [244, 307, 336, 307, 343, 'r'],
    [256, 322, 346, 322, 357, 'r'], [269, 335, 357, 335, 374, 'r'], [281, 345, 374, 345, 386, 'r'], [293, 359, 382, 359, 393, 'r'],
    [306, 370, 386, 370, 395, 'k'], [318, 377, 386, 373, 405, 'r'], [330, 380.5, 381.5, 373, 387, 'r'], [343, 381, 397, 380, 417, 'k'],
    [355, 388, 404, 388, 412, 'k'], [367, 397, 415, 397, 424, 'k'], [380, 404.5, 405.5, 385, 423, 'r'], [392, 392, 406, 385, 406, 'r'],
    [404, 399, 407, 397, 423, 'r'], [417, 402, 408, 401, 417, 'r'], [429, 399, 405, 389, 410, 'r'], [442, 393, 402, 387, 402, 'r'],
    [454, 398, 410, 398, 423, 'r'], [466, 403, 432, 403, 441, 'k'], [479, 417, 429, 417, 441, 'r'], [491, 416, 422, 409, 428, 'r'],
    [503, 400, 420, 389, 420, 'p'], [516, 395, 410, 382, 410, 'r'], [528, 401, 404, 387, 410, 'r'], [540, 400, 403, 390, 419, 'p'],
    [553, 383, 401, 373, 401, 'l'], [565, 372, 393, 358, 393, 'g'], [577, 366, 382, 358, 382, 'g'], [590, 368, 374, 354, 379, 'g'],
    [602, 371, 375, 366, 387, 'l'], [614, 370, 373, 351, 386, 'g'], [627, 352, 371, 342, 371, 'g'], [639, 336, 362, 330, 362, 'g'],
    [651, 345, 349, 332, 363, 'g'], [664, 347, 358, 347, 374, 'g'], [676, 345, 353, 330, 360, 'g'], [689, 328, 349, 318, 349, 'g'],
    [701, 323, 338, 317, 338, 'g'], [713, 330, 331.5, 320, 343, 'g'], [726, 330, 347, 330, 367, 'l'], [738, 339, 348, 339, 357, 'g'],
    [750, 344, 348, 330, 363, 'g'], [763, 334, 346, 324, 346, 'g'], [775, 325, 340, 316, 340, 'g'], [787, 322, 332, 317, 332, 'g'],
    [800, 326.5, 327.5, 318, 340, 'g'], [812, 327, 335, 327, 343, 'g'], [824, 331, 334, 325, 348, 'g'], [837, 333, 337, 323, 349, 'l'],
    [849, 332, 335, 311, 358, 'g'], [861, 305, 334, 299, 334, 'g'], [874, 286, 316, 280, 316, 'g'], [886, 298, 301, 282, 308, 'g'],
    [899, 300, 313, 300, 321, 'g'], [911, 306, 325, 306, 336, 'l'], [923, 316, 339, 316, 349, 'r'], [936, 327, 344, 327, 355, 'r'],
    [948, 335, 349, 335, 358, 'r'], [960, 342, 357, 342, 363, 'r'], [973, 349, 361, 349, 371, 'r'], [985, 355, 357, 351, 362, 'r']
  ];
  var style = {
    g: ['url(#cg)', '#2a8a30'], d: ['url(#cd)', '#064a10'], l: ['url(#cl)', '#62c262'],
    r: ['url(#cr)', '#8a3838'], p: ['url(#cp)', '#b85050'], k: ['url(#ck)', '#300404']
  };
  var cg = document.getElementById('candles');
  candles.forEach(function (c) {
    var s = style[c[5]];
    el(cg, 'path', { d: 'M' + c[0] + ' ' + c[3] + 'V' + c[4], stroke: s[1], 'stroke-width': 1.2 });
    el(cg, 'rect', { x: c[0] - 5, y: c[1], width: 10, height: c[2] - c[1], fill: s[0], stroke: s[1], 'stroke-width': 1 });
  });

  var og = document.getElementById('oranges');
  [172.5, 220.5, 293, 344, 410].forEach(function (y) {
    el(og, 'path', { d: 'M2 ' + y + 'H1092', stroke: '#ff8030', 'stroke-width': 1 });
  });
  line(og, Z3([584, 76, 625, 80, 680, 125, 720, 170, 780, 260, 850, 330, 920, 385, 1000, 420, 1100, 465, 1200, 480]).concat(O1b), '#ff8030', 1);
  line(og, Z3([620, 140, 700, 210, 780, 300, 850, 350, 950, 430, 1040, 515, 1100, 545, 1200, 565]), '#ff8030', 1);
  line(og, Z6([0, 410, 50, 415]).concat(Z6([270, 430, 310, 447])), '#ff8030', 1);
  line(og, Z6([980, 132, 1050, 155, 1090, 165, 1140, 160]).concat(Z5([100, 165, 200, 175, 270, 205])), '#ff8030', 1);
  line(og, Z5([455, 40, 540, 105, 610, 160, 678, 195]), '#ff8030', 1);

  /* ---------- panel 2 (RSI) ---------- */
  var p2 = document.getElementById('p2');
  function Z7(a) { return conv(0, 480, a); }
  function Z9(a) { return conv(700, 480, a); }
  el(p2, 'path', { d: 'M2 517.500H1092', stroke: '#000', 'stroke-width': 1 });
  el(p2, 'path', { d: 'M2 565.500H1092', stroke: '#a80010', 'stroke-width': 1 });
  var green = Z7([6, 133, 60, 120, 140, 115, 220, 100, 370, 82, 440, 62, 560, 32, 650, 30, 740, 30, 810, 38, 920, 38, 1030, 48, 1140, 62, 1200, 80, 1290, 118, 1380, 165, 1440, 178, 1500, 175])
    .concat([[520, 534], [540, 524], [580, 508], [610, 499], [640, 495], [670, 495]]).concat(Z9([0, 45, 100, 45, 190, 40, 262, 33, 400, 33, 520, 25, 630, 30, 780, 42, 857, 44]));
  var red = Z7([6, 214, 60, 212, 140, 202, 220, 180, 320, 157, 430, 148, 550, 120, 625, 103, 700, 105, 770, 118, 850, 143, 950, 162, 1100, 203, 1170, 212, 1250, 220, 1340, 216, 1500, 217])
    .concat([[560, 550], [620, 545], [660, 537]]).concat(Z9([0, 152, 80, 122, 150, 105, 262, 85, 310, 78, 450, 78, 520, 70, 640, 78, 700, 90, 800, 118, 857, 125]));
  var black = Z7([6, 68, 28, 48, 65, 110, 103, 138, 140, 118, 178, 88, 214, 78, 250, 78, 290, 82, 325, 87, 360, 82, 400, 35, 425, -10, 560, -10, 575, 10, 600, 35, 625, 68, 657, 118, 697, 135, 735, 157, 770, 165, 808, 202, 845, 210, 880, 213, 918, 226, 955, 183, 990, 198, 1030, 229, 1066, 224, 1102, 247, 1141, 175, 1177, 181, 1213, 202, 1252, 190, 1290, 169, 1327, 169, 1365, 214, 1400, 235, 1440, 181, 1475, 169, 1500, 142])
    .concat([[512, 527], [525, 522], [545, 518], [570, 505], [600, 505], [620, 495], [640, 484], [660, 505], [680, 490]]).concat(Z9([0, 15, 40, 55, 80, 91, 115, 76, 152, 73, 190, 42, 260, 25, 300, 60, 340, 75, 373, 58, 413, 110, 450, 35, 470, 0, 510, 0, 530, 15, 560, 58, 600, 75, 640, 110, 670, 140, 710, 148, 745, 143, 780, 172, 820, 155, 857, 148]));
  area(p2, Z7([6, 68, 28, 48, 65, 110, 75, 118]), Z7([6, 133, 60, 120, 75, 118]), 'url(#g2)');
  area(p2, Z7([140, 115, 178, 88, 214, 78, 250, 78, 290, 82, 325, 87, 360, 82, 400, 35, 425, -10, 560, -10, 575, 10, 600, 32]), Z7([140, 115, 220, 100, 370, 82, 440, 62, 560, 32, 600, 32]), 'url(#g2)');
  area(p2, Z7([657, 118, 697, 135, 735, 157, 770, 165, 808, 202, 845, 210, 880, 213, 918, 226, 955, 183, 990, 198, 1030, 229, 1066, 224, 1102, 247, 1130, 205]), Z7([657, 118, 625, 103, 700, 105, 770, 118, 850, 143, 950, 162, 1100, 203, 1130, 205]), 'url(#r2)');
  area(p2, Z7([1365, 217, 1400, 235, 1417, 217]), Z7([1365, 217, 1417, 217]), 'url(#r2)');
  area(p2, Z7([1425, 178, 1440, 181, 1475, 169, 1500, 142]).concat([[512, 527], [525, 522], [545, 518], [570, 505]]), Z7([1425, 178, 1500, 175]).concat([[520, 534], [540, 524], [570, 509]]), 'url(#g2)');
  area(p2, [[620, 495], [640, 484], [652, 497]], [[620, 497], [640, 495], [652, 497]], 'url(#g2)');
  area(p2, [[670, 496], [680, 490], [700, 485], [706, 493]], [[670, 495], [700, 495], [706, 495]], 'url(#g2)');
  area(p2, Z9([190, 42, 260, 25, 275, 32]), Z9([190, 40, 262, 33, 275, 33]), 'url(#g2)');
  area(p2, Z9([385, 78, 413, 110, 430, 78]), Z9([385, 78, 430, 78]), 'url(#r2)');
  area(p2, Z9([450, 33, 470, 0, 510, 0, 530, 25]), Z9([450, 33, 530, 25]), 'url(#g2)');
  area(p2, Z9([600, 75, 640, 110, 670, 140, 710, 148, 745, 143, 780, 172, 820, 155, 857, 148]), Z9([600, 75, 640, 78, 700, 90, 800, 118, 857, 125]), 'url(#r2)');
  line(p2, green, '#18e818', 1.1);
  line(p2, red, '#f01818', 1.1);
  line(p2, black, '#222', 1);

  /* ---------- panel 3 (MACD-like) ---------- */
  var p3 = document.getElementById('p3');
  var a3 = Z7([6, 385, 28, 372, 65, 385, 103, 418, 140, 430, 178, 430, 214, 420, 250, 416, 290, 414, 325, 417, 360, 427, 400, 418, 436, 385, 470, 367, 515, 362, 550, 358, 590, 370, 625, 395, 660, 438, 697, 478, 735, 515, 770, 545, 808, 570, 860, 610, 1080, 610, 1105, 589, 1140, 560, 1177, 533, 1213, 518, 1252, 500, 1290, 478, 1327, 462, 1365, 468, 1400, 480, 1440, 478, 1475, 468, 1500, 455])
    .concat([[520, 625], [540, 615], [575, 608], [600, 610], [620, 605], [650, 603], [680, 610]])
    .concat(Z9([0, 392, 40, 405, 80, 425, 115, 445, 150, 457, 262, 440, 340, 460, 410, 478, 450, 465, 490, 435, 530, 420, 590, 430, 630, 450, 670, 482, 720, 505, 780, 530, 820, 530, 857, 522]));
  var first = a3[0][0], last = a3[a3.length - 1][0];
  area(p3, a3, [[first, 633.5], [last, 633.5]], 'url(#g3)', 'c3a');
  area(p3, a3, [[first, 633.5], [last, 633.5]], 'url(#r3)', 'c3b');
  el(p3, 'path', { d: 'M2 620H1092', stroke: '#0a68c8', 'stroke-width': 1.2 });
  el(p3, 'path', { d: 'M2 633.500H1092', stroke: '#000', 'stroke-width': 1.2 });
  el(p3, 'path', { d: 'M2 647.500H1092', stroke: '#0a68c8', 'stroke-width': 1.2 });
  seg(p3, a3, '#902040', '#207060', 1);
  var zig = Z7([35, 338, 65, 425, 103, 465, 140, 455, 178, 427, 214, 424, 250, 433, 290, 439, 325, 412, 360, 416, 420, 338, 440, 300, 460, 338, 515, 388, 548, 352, 585, 420, 625, 436, 657, 535, 697, 535, 735, 553, 770, 535, 790, 589, 830, 680, 955, 578, 985, 589, 1040, 680, 1120, 589, 1150, 510, 1177, 470, 1213, 488, 1250, 460, 1290, 397, 1327, 384, 1365, 460, 1400, 500, 1438, 448, 1475, 436, 1500, 403])
    .concat([[510, 612], [515, 620], [530, 630], [550, 605], [560, 600], [580, 625], [600, 628], [625, 600], [640, 600], [665, 635], [680, 605], [695, 600]])
    .concat(Z9([0, 395, 40, 462, 80, 490, 115, 478, 150, 458, 215, 450, 262, 440, 300, 468, 340, 472, 373, 462, 413, 513, 485, 388, 522, 388, 590, 450, 632, 510, 672, 520, 745, 503, 780, 543, 820, 545, 857, 528]));
  seg(p3, zig, '#ff78ec', '#0f8f18', 2);

  /* ---------- panel 4 (histogram) ---------- */
  var p4 = document.getElementById('p4');
  function Z8(a) { return conv(0, 675, a); }
  function Z10(a) { return conv(700, 675, a); }
  var blue4 = Z8([6, 180, 30, 163, 65, 160, 103, 166, 140, 163, 178, 155, 214, 145, 250, 130, 290, 127, 360, 120, 400, 105, 440, 75, 470, 58, 515, 45, 550, 30, 585, 25, 625, 30, 660, 50, 700, 75, 740, 97, 780, 125, 830, 165, 880, 195, 920, 215, 990, 232, 1040, 250, 1105, 275, 1180, 268, 1250, 272, 1327, 258, 1400, 277, 1475, 270, 1500, 258])
    .concat([[530, 757], [560, 745], [600, 727], [640, 715], [680, 705]]).concat(Z10([0, 85, 60, 80, 150, 85, 262, 70, 340, 78, 412, 90, 470, 70, 530, 58, 560, 58, 620, 72, 700, 110, 780, 140, 855, 157]));
  var sal4 = Z8([6, 225, 50, 208, 100, 195, 180, 180, 250, 165, 320, 150, 400, 135, 470, 105, 550, 85, 625, 62, 700, 62, 800, 90, 900, 135, 1000, 180, 1100, 220, 1200, 243, 1327, 258, 1430, 265, 1500, 258])
    .concat([[560, 745], [620, 725], [680, 710]]).concat(Z10([0, 95, 262, 85, 400, 80, 530, 72, 620, 72, 780, 100, 858, 120]));
  area(p4, Z8([6, 180, 30, 163, 65, 160, 103, 166, 140, 163, 178, 155, 214, 145, 250, 130, 290, 127, 360, 120, 400, 105, 440, 75, 470, 58, 515, 45, 550, 30, 585, 25, 625, 30, 660, 52]), Z8([6, 225, 50, 208, 100, 195, 180, 180, 250, 165, 320, 150, 400, 135, 470, 105, 550, 85, 625, 62, 660, 52]), 'url(#g4)');
  area(p4, Z8([660, 52, 700, 62, 800, 90, 900, 135, 1000, 180, 1100, 220, 1200, 243, 1327, 258, 1430, 265, 1500, 258]), Z8([660, 52, 700, 75, 740, 97, 780, 125, 830, 165, 880, 195, 920, 215, 990, 232, 1040, 250, 1105, 275, 1180, 268, 1250, 272, 1327, 258, 1400, 277, 1475, 270, 1500, 258]), 'url(#r4)');
  area(p4, [[560, 745], [600, 727], [640, 715], [680, 705]].concat(Z10([0, 85, 60, 80, 150, 85, 262, 70, 340, 78, 400, 85])), [[560, 745], [620, 725], [680, 710]].concat(Z10([0, 95, 262, 85, 400, 80])), 'url(#g4)');
  area(p4, Z10([440, 85, 470, 70, 530, 58, 560, 58, 620, 72]), Z10([440, 80, 530, 72, 620, 72]), 'url(#g4)');
  area(p4, Z10([620, 72, 780, 100, 858, 120]), Z10([620, 72, 700, 110, 780, 140, 855, 150]), 'url(#r4)');
  var hb = [
    [9, 97], [22, 103], [34, 118], [46, 121], [59, 118], [71, 115], [83, 115], [96, 118], [108, 121], [120, 124], [133, 118], [145, 100], [157, 94], [170, 94], [182, 94], [194, 100], [207, 115], [219, 139],
    [232, 160], [244, 175], [256, 187], [269, 202], [281, 215], [293, 217], [306, 217], [318, 212], [330, 205], [343, 205], [355, 205], [367, 205], [380, 190], [392, 181], [404, 178], [417, 172], [429, 163], [442, 154], [454, 160], [466, 166], [479, 160], [491, 154],
    [503, 140], [515, 135], [527, 130], [540, 124], [552, 118], [564, 112], [577, 109], [589, 106], [601, 106], [614, 106], [626, 106], [638, 106], [650, 103], [663, 103], [675, 106], [687, 106], [700, 106],
    [713, 115], [727, 127], [739, 133], [751, 139], [763, 139], [776, 136], [787, 133], [800, 139], [812, 145], [837, 157], [861, 136], [874, 130], [887, 136], [899, 142], [911, 154], [923, 166], [936, 175], [948, 181], [960, 187], [973, 187], [985, 184]
  ];
  var zero = 724.5;
  hb.forEach(function (b) {
    var y = 675 + b[1] / 3, up = y < zero;
    var top = up ? y : zero, h = Math.abs(y - zero);
    el(p4, 'rect', { x: b[0] - 5, y: top, width: 10.4, height: h, fill: up ? 'url(#hg)' : 'url(#hr)', stroke: up ? '#1f9c2b' : '#b03030', 'stroke-width': 1 });
  });
  el(p4, 'path', { d: 'M2 700H1092', stroke: '#009000', 'stroke-width': 2.4 });
  el(p4, 'path', { d: 'M2 748H1092', stroke: '#d00000', 'stroke-width': 2.4 });
  el(p4, 'path', { d: 'M2 724.500H1092', stroke: '#2a38d0', 'stroke-width': 1.2 });
  line(p4, sal4, '#ee8880', 1);
  line(p4, blue4, '#3a48dc', 1.1);

  /* ---------- panel 5 ---------- */
  var p5 = document.getElementById('p5');
  var a5 = Z8([6, 300, 70, 300, 103, 340, 135, 352, 218, 347, 290, 373, 360, 365, 395, 335, 420, 295, 575, 295, 622, 345, 660, 409, 697, 445, 735, 470, 770, 463, 808, 495, 845, 540, 890, 575, 940, 575, 955, 560, 990, 556, 1015, 575, 1177, 570, 1215, 545, 1255, 520, 1327, 421, 1365, 412, 1400, 428, 1475, 385, 1500, 360])
    .concat([[515, 792], [540, 785], [560, 773], [640, 773], [655, 785], [670, 790], [690, 773]])
    .concat(Z10([20, 305, 60, 345, 80, 365, 115, 385, 150, 387, 190, 385, 262, 388, 335, 408, 375, 409, 412, 430, 450, 420, 485, 390, 523, 367, 560, 367, 605, 395, 635, 425, 670, 451, 710, 457, 745, 448, 790, 460, 820, 470, 857, 470]));
  var f5 = a5[0][0], l5 = a5[a5.length - 1][0];
  area(p5, a5, [[f5, 811.3], [l5, 811.3]], 'url(#g5)', 'c5a');
  area(p5, a5, [[f5, 811.3], [l5, 811.3]], 'url(#r5)', 'c5b');
  ['790.500', '811.500', '832.500'].forEach(function (y) {
    el(p5, 'path', { d: 'M2 ' + y + 'H1092', stroke: '#2a38d0', 'stroke-width': 1.1 });
  });
  seg(p5, a5, '#d81818', '#2088d8', 1);
})();
```
